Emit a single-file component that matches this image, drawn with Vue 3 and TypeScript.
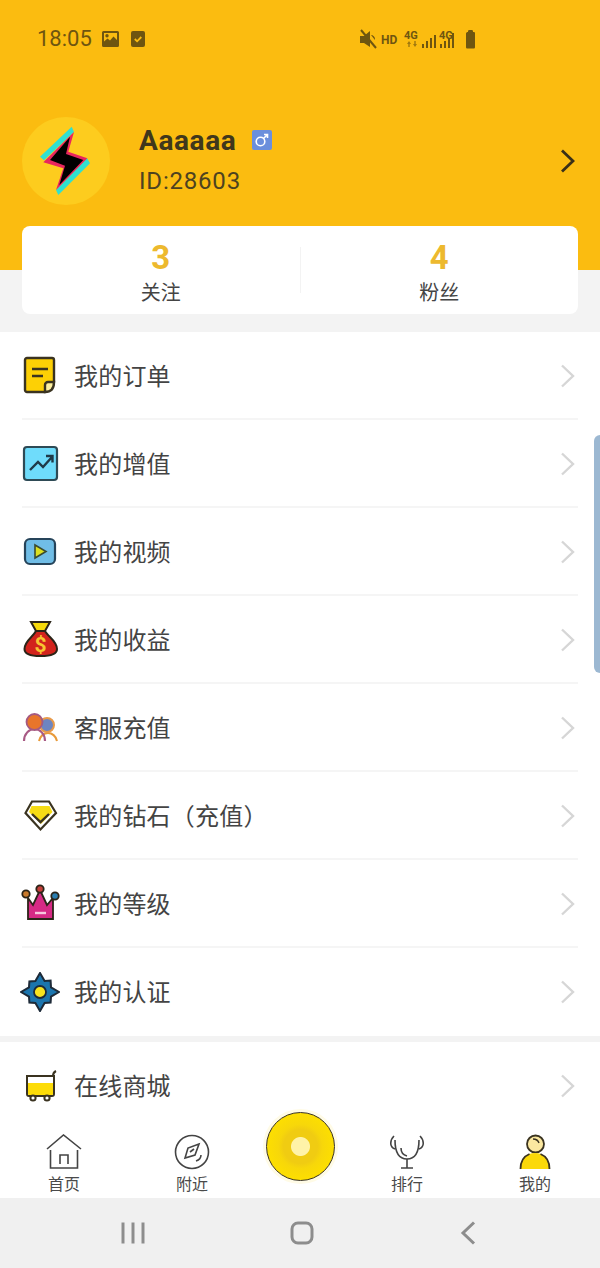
<template>
  <div class="phone">
    <div class="content">
      <header class="hero">
        <div class="status">
          <span class="clock">18:05</span>
          <svg class="st-pic" viewBox="0 0 17 16">
            <path fill-rule="evenodd" d="M1.500 0h14A1.500 1.500 0 0 1 17 1.500v13a1.500 1.500 0 0 1-1.500 1.500h-14A1.500 1.500 0 0 1 0 14.500v-13A1.500 1.500 0 0 1 1.500 0zM2 2v8.500l3.500-3 2.500 2 3.500-4 3.500 3.500V2zm3 1a1.700 1.700 0 1 0 0 3.400A1.700 1.700 0 0 0 5 3z" />
          </svg>
          <svg class="st-check" viewBox="0 0 14 16">
            <rect width="14" height="16" y="0" rx="2" />
            <path d="M3.800 8l2.300 2.300 4.200-4.300" fill="none" stroke="#fbbc10" stroke-width="1.800" />
          </svg>
          <svg class="st-right" viewBox="0 0 122 24">
            <g fill="#6e5510">
              <path d="M1 9h4l6-5v16l-6-4H1z" />
              <path d="M2 3l15 18" stroke="#6e5510" stroke-width="2" />
              <path d="M12 8l4 5v-1c0-2-2-4-4-4z" />
              <text x="22" y="17" class="st-hd">HD</text>
              <text x="45" y="12" class="st-net">4G</text>
              <path d="M50 14l-2 3h1.300v3h1.400v-3H52zM56 20l2-3h-1.300v-3h-1.400v3H54z" opacity="0.65" />
              <rect x="63" y="17" width="2" height="4" />
              <rect x="67" y="14" width="2" height="7" />
              <rect x="71" y="11" width="2" height="10" />
              <rect x="75" y="8" width="2" height="13" />
              <text x="80" y="12" class="st-net">4G</text>
              <rect x="81" y="17" width="2" height="4" />
              <rect x="85" y="14" width="2" height="7" />
              <rect x="89" y="11" width="2" height="10" />
              <rect x="93" y="6" width="2" height="15" />
              <path d="M109 5c0-1 0-2 1-2h3c1 0 1 1 1 2h1c1 0 1 1 1 1.500V20c0 1-.5 1.500-1.500 1.500h-6c-1 0-1.500-.5-1.500-1.500V6.500C107 5.500 108 5 109 5z" />
            </g>
          </svg>
        </div>

        <div class="profile">
          <div class="avatar">
            <svg viewBox="0 0 88 88" width="88" height="88">
              <path d="M49.700 9.700L18 39.700l4 3.500L52 15zM68 46.300L36.300 78 34 73l31-32z" fill="#2fe0d0" />
              <path d="M52 15L21.300 45.300l20 6L34 73l31.300-31.700-19-6.600z" fill="#e8265e" />
              <path d="M48 19.700L28 43l15 5.700L37.300 68l24-25L44 37z" fill="#000" />
            </svg>
          </div>
          <div class="who">
            <div class="name-line">
              <span class="name">Aaaaaa</span>
              <span class="gender">
                <svg viewBox="0 0 20 20" width="20" height="20">
                  <circle cx="8.500" cy="11.500" r="4.300" fill="none" stroke="#fff" stroke-width="1.600" />
                  <path d="M11.500 8.500L15.500 4.500M12 4.500h3.500V8" fill="none" stroke="#fff" stroke-width="1.600" />
                </svg>
              </span>
            </div>
            <div class="uid">ID:28603</div>
          </div>
          <svg class="profile-arrow" viewBox="0 0 15 24" width="15" height="24">
            <path d="M2 1.500L13 12 2 22.500" fill="none" stroke="#3a3018" stroke-width="2.800" />
          </svg>
        </div>
      </header>

      <section class="stats">
        <div class="stat">
          <b>3</b>
          <span>关注</span>
        </div>
        <i class="stat-line"></i>
        <div class="stat">
          <b>4</b>
          <span>粉丝</span>
        </div>
      </section>

      <ul class="menu">
        <li v-for="item in menu" :key="item.icon" class="row">
          <svg class="row-icon" viewBox="0 0 40 40" width="40" height="40">
            <g v-if="item.icon === 'order'" stroke="#3a3320" stroke-width="2.400">
              <path d="M7 2h25a2 2 0 0 1 2 2v22l-9 10H7a2 2 0 0 1-2-2V4a2 2 0 0 1 2-2z" fill="#fdd005" />
              <path d="M25 36v-7a3 3 0 0 1 3-3h6c0 6-3 10-9 10z" fill="#fdf0a0" />
              <path d="M12 13h16M12 20h11" fill="none" />
            </g>
            <g v-else-if="item.icon === 'growth'">
              <rect x="4" y="3" width="33" height="33" rx="3" fill="#6fdcfb" stroke="#2e4a55" stroke-width="2.200" />
              <path d="M10 26l8-8 5 5 9-10M26 12h6.500v6.500" fill="none" stroke="#1f3a48" stroke-width="2.400" />
            </g>
            <g v-else-if="item.icon === 'video'">
              <rect x="5" y="7" width="30" height="25" rx="5" fill="#70bde6" stroke="#26445a" stroke-width="2.200" />
              <path d="M15 13l11 6.500L15 26z" fill="#dbe020" stroke="#3a4a30" stroke-width="1.600" />
            </g>
            <g v-else-if="item.icon === 'money'">
              <path d="M11 2h19l-5 9h-9z" fill="#f6d90a" stroke="#2b2418" stroke-width="2" />
              <path d="M16 11h9c3 6 12 10 12 18 0 5-6 7-16.500 7S4.500 34 4.500 29c0-8 8.500-12 11.500-18z" fill="#d2231c" stroke="#2b2418" stroke-width="2" />
              <text x="20.500" y="32" class="dollar">$</text>
            </g>
            <g v-else-if="item.icon === 'service'" fill="none">
              <path d="M19 33c1-5 5-8 9-8s8 3 9 8" stroke="#e89a3a" stroke-width="2" />
              <path d="M4 33c0-7 5-12 10.500-12S25 26 25 33" stroke="#a85a85" stroke-width="2.200" />
              <circle cx="27" cy="17" r="7" fill="#6d85c0" stroke="#e89a4a" stroke-width="2" />
              <circle cx="14.500" cy="14" r="8" fill="#e8752a" stroke="#a45a82" stroke-width="1.800" />
            </g>
            <g v-else-if="item.icon === 'diamond'">
              <path d="M12 5.500h17L36 17 20.500 33.500 5.500 17z" fill="#fff" stroke="#3a3320" stroke-width="2.200" />
              <path d="M11.500 10h18l3 6L21 28 9 16z" fill="#f6dc14" />
              <path d="M12 18l8.500 8 8.500-8" fill="none" stroke="#3a3320" stroke-width="2.400" />
            </g>
            <g v-else-if="item.icon === 'crown'" stroke="#2b2418" stroke-width="1.800">
              <path d="M8 14l5 7 7-15 7 15 6-7v21H8z" fill="#d62a85" />
              <path d="M15 29h11" stroke="#f7c9de" stroke-width="2.400" />
              <circle cx="6" cy="10" r="3.700" fill="#c97a2c" />
              <circle cx="20" cy="5" r="3.700" fill="#c2403a" />
              <circle cx="35" cy="12" r="3.700" fill="#2a7eb0" />
            </g>
            <g v-else stroke="#1d2a38" stroke-width="2">
              <path d="M20 1l4.600 8 6-.4.4 6.800 8 4.600-8 4.600-.4 6-6 .4L20 39l-4.600-8-6-.4-.4-6L1 20l8-4.600.4-6 6-.4z" fill="#1b75ae" />
              <circle cx="20" cy="20" r="6" fill="#f7e420" stroke-width="1.800" />
            </g>
          </svg>
          <span class="row-label">{{ item.label }}</span>
          <svg class="row-arrow" viewBox="0 0 15 24" width="15" height="24">
            <path d="M2 1.500L13 12 2 22.500" fill="none" stroke="#d6d6d6" stroke-width="2.400" />
          </svg>
        </li>
      </ul>

      <ul class="menu shop">
        <li class="row">
          <svg class="row-icon" viewBox="0 0 40 40" width="40" height="40">
            <g stroke="#3a3320" stroke-width="2" fill="none">
              <path d="M7 10h27v18a2 2 0 0 1-2 2H9a2 2 0 0 1-2-2z" fill="#fff" />
              <path d="M8 17h25v11a1 1 0 0 1-1 1H9a1 1 0 0 1-1-1z" fill="#fddc08" stroke="none" />
              <path d="M33 10c0-3 1-4 3-5" />
              <circle cx="13" cy="32" r="2.600" fill="#fff" />
              <circle cx="27" cy="32" r="2.600" fill="#fff" />
            </g>
          </svg>
          <span class="row-label">在线商城</span>
          <svg class="row-arrow" viewBox="0 0 15 24" width="15" height="24">
            <path d="M2 1.500L13 12 2 22.500" fill="none" stroke="#d6d6d6" stroke-width="2.400" />
          </svg>
        </li>
      </ul>

      <div class="scrollbar"></div>
    </div>

    <nav class="tabs">
      <div class="tab">
        <svg viewBox="0 0 36 36" width="36" height="36" fill="none" stroke="#444" stroke-width="1.600">
          <path d="M1 15L17.500 1 35 15M4.500 16v18h27V16" />
          <path d="M14 30v-9h8v9" />
        </svg>
        <span>首页</span>
      </div>
      <div class="tab">
        <svg viewBox="0 0 36 36" width="36" height="36" fill="none" stroke="#444" stroke-width="1.600">
          <circle cx="18" cy="18" r="16.500" />
          <path d="M25 10l-11 4-3 10 10-3z" />
          <path d="M16 18l4-3" />
          <path d="M27 21c0 3-2 5-5 6" />
        </svg>
        <span>附近</span>
      </div>
      <div class="tab">
        <div class="disc"></div>
      </div>
      <div class="tab">
        <svg viewBox="0 0 36 36" width="36" height="36" fill="none" stroke="#444" stroke-width="1.600">
          <path d="M5 2C1 6 0 13 6 15M31 2c4 4 5 11-1 13" />
          <path d="M6 6c0 14 5 19 12 19s12-5 12-19" />
          <path d="M12 14c0 4 2 7 6 8" />
          <path d="M18 25v9M12 34h12" />
        </svg>
        <span>排行</span>
      </div>
      <div class="tab">
        <svg viewBox="0 0 36 36" width="36" height="36" fill="none" stroke="#3a3320" stroke-width="1.800">
          <circle cx="18.500" cy="10" r="8.500" fill="#fbe8a0" />
          <path d="M16 5c3 0 5 1 6 4" stroke-width="1.400" />
          <path d="M3.500 35c0-10 6-16 14.500-16s14.500 6 14.500 16z" fill="#fbd90a" stroke="none" />
          <path d="M3.500 35c0-8 4-13 9-15M32.500 35c0-8-4-13-9-15" />
        </svg>
        <span>我的</span>
      </div>
    </nav>

    <div class="navbar">
      <svg viewBox="0 0 24 24" width="24" height="24" fill="none" stroke="#8d8d8d" stroke-width="3">
        <path d="M2 1.500v21M12 1.500v21M22 1.500v21" />
      </svg>
      <svg viewBox="0 0 24 24" width="24" height="24" fill="none" stroke="#8d8d8d" stroke-width="3">
        <rect x="2" y="2" width="20" height="20" rx="6" />
      </svg>
      <svg viewBox="0 0 24 24" width="24" height="24" fill="none" stroke="#8d8d8d" stroke-width="3">
        <path d="M17 1.500L6 12l11 10.500" />
      </svg>
    </div>
  </div>
</template>

<script setup lang="ts">
interface MenuItem {
  icon: string
  label: string
}

const menu: MenuItem[] = [
  { icon: 'order', label: '我的订单' },
  { icon: 'growth', label: '我的增值' },
  { icon: 'video', label: '我的视频' },
  { icon: 'money', label: '我的收益' },
  { icon: 'service', label: '客服充值' },
  { icon: 'diamond', label: '我的钻石（充值）' },
  { icon: 'crown', label: '我的等级' },
  { icon: 'cert', label: '我的认证' },
]
</script>

<style scoped>
.phone {
  width: 600px;
  height: 1268px;
  display: flex;
  flex-direction: column;
  overflow: hidden;
  background: #f3f3f3;
  font-family: "Noto Sans CJK SC", Roboto, sans-serif;
  color: #444;
}

.content {
  flex: 1;
  min-height: 0;
  overflow: hidden;
  position: relative;
}

/* Yellow header */
.hero {
  height: 270px;
  background: #fbbc10;
}

.status {
  height: 78px;
  display: flex;
  align-items: center;
  padding-left: 37px;
  color: #6e5510;
}

.clock {
  font: 22px/1 Roboto, sans-serif;
  width: 65px;
}

.st-pic {
  width: 17px;
  height: 16px;
  fill: #6e5510;
}

.st-check {
  width: 14px;
  height: 16px;
  margin-left: 12px;
  fill: #6e5510;
}

.st-right {
  width: 122px;
  height: 24px;
  margin-left: 214px;
}

.st-hd {
  font: 700 12px Roboto, sans-serif;
}

.st-net {
  font: 700 11px Roboto, sans-serif;
}

.profile {
  margin-top: 39px;
  padding: 0 25px 0 22px;
  display: flex;
  align-items: center;
  height: 88px;
}

.avatar {
  width: 88px;
  height: 88px;
  border-radius: 50%;
  background: #fdcc1e;
  flex: none;
}

.who {
  margin: -8px 0 0 29px;
  flex: 1;
}

.name-line {
  display: flex;
  align-items: flex-start;
  height: 48px;
}

.name {
  font: 700 28px/48px Roboto, sans-serif;
  color: #40371c;
  letter-spacing: 0.6px;
}

.gender {
  width: 20px;
  height: 20px;
  margin: 13px 0 0 16px;
  background: #6b8fdc;
  border-radius: 2px;
  display: block;
}

.uid {
  font: 24px/32px Roboto, sans-serif;
  color: #4d4220;
  letter-spacing: 0.8px;
}

.profile-arrow {
  flex: none;
}

/* Follow counters */
.stats {
  position: relative;
  margin: -44px 22px 18px;
  height: 88px;
  background: #fff;
  border-radius: 8px;
  display: flex;
  align-items: center;
}

.stat {
  flex: 1;
  padding-top: 6px;
  display: flex;
  flex-direction: column;
  align-items: center;
}

.stat b {
  font: 700 33px/38px Roboto, sans-serif;
  color: #edb92e;
}

.stat span {
  font-size: 20px;
  line-height: 30px;
  color: #444;
}

.stat-line {
  width: 1px;
  height: 46px;
  background: #f3f3f3;
}

/* Menu list */
.menu {
  list-style: none;
  margin: 0;
  padding: 0;
  background: #fff;
}

.shop {
  margin-top: 6px;
}

.row {
  box-sizing: border-box;
  height: 88px;
  margin: 0 22px;
  padding-top: 2px;
  display: flex;
  align-items: center;
  border-bottom: 2px solid #f5f5f5;
}

.row:last-child {
  border-bottom-color: transparent;
}

.row-icon {
  flex: none;
  margin: 0 14px 0 -2px;
}

.row-label {
  flex: 1;
  margin-bottom: 4px;
  font-size: 24px;
  letter-spacing: 0.2px;
  color: #444;
}

.row-arrow {
  flex: none;
  margin-right: 3px;
}

.dollar {
  font: 700 21px Roboto, sans-serif;
  fill: #f7c531;
  stroke: none;
  text-anchor: middle;
}

/* Overlay scroll indicator */
.scrollbar {
  position: absolute;
  right: 0;
  top: 435px;
  width: 6px;
  height: 238px;
  border-radius: 6px 0 0 6px;
  background: #9cb8d2;
}

/* Bottom tabs */
.tabs {
  position: relative;
  height: 80px;
  flex: none;
  background: #fff;
  display: grid;
  grid-template-columns: 128px 128px 88px 126px 130px;
}

.tab {
  padding-top: 16px;
  display: flex;
  flex-direction: column;
  align-items: center;
  gap: 3px;
}

.tab span {
  font-size: 16px;
  line-height: 20px;
  color: #4a4a4a;
}

.disc {
  box-sizing: border-box;
  width: 69px;
  height: 69px;
  margin-top: -22px;
  border-radius: 50%;
  border: 1.5px solid #3a3320;
  background: radial-gradient(circle, #fff3a8 0 9px, #f0cc12 10px 17px, #f7d70a 22px, #fddf00 34px);
  box-shadow: 0 0 0 3px #fffbe6;
}

/* System navigation */
.navbar {
  height: 70px;
  flex: none;
  background: #f0f0f0;
  display: grid;
  grid-template-columns: 266px 72px 262px;
  justify-items: center;
  align-items: center;
}
</style>

<style>
html,
body {
  margin: 0;
}
</style>
